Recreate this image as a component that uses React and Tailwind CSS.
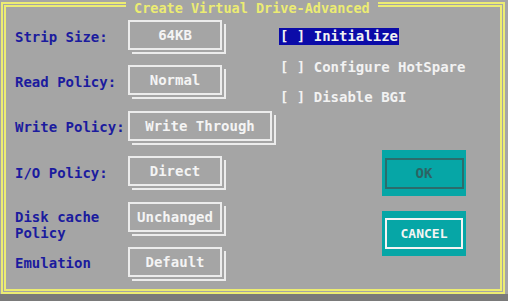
import React from "react";

const rows = [
  { label: "Strip Size:", value: "64KB", w: "w-[94px]" },
  { label: "Read Policy:", value: "Normal", w: "w-[94px]" },
  { label: "Write Policy:", value: "Write Through", w: "w-[144px]" },
  { label: "I/O Policy:", value: "Direct", w: "w-[94px]" },
  { label: ["Disk cache", "Policy"], value: "Unchanged", w: "w-[94px]" },
  { label: "Emulation", value: "Default", w: "w-[94px]" },
];

const options = [
  { text: "[ ] Initialize", active: true },
  { text: "[ ] Configure HotSpare" },
  { text: "[ ] Disable BGI" },
];

function ValueBox({ value, w }) {
  return (
    <div
      className={`${w} h-[30px] border-2 border-[#ececec] flex items-center justify-center text-[#f4f4f4] shadow-[2px_2px_0_#a5a5a5,4px_4px_0_#ececec]`}
    >
      {value}
    </div>
  );
}

export default function App() {
  return (
    <div
      className="w-[508px] h-[301px] bg-[#a5a5a5] flex flex-col font-bold text-[14px] leading-[16px]"
      style={{ fontFamily: '"DejaVu Sans Mono", "Liberation Mono", monospace' }}
    >
      <div className="relative ml-[1px] mt-[2px] w-[504px] h-[292px] border-[5px] border-double border-[#ecec72] flex">
        <div className="absolute top-[-7px] left-[120px] px-[8px] pt-[1px] bg-[#a5a5a5] text-[#ecec72] text-[13.5px] leading-[14px]">
          Create Virtual Drive-Advanced
        </div>

        {/* left column: labels + value boxes */}
        <div className="w-[273px] pl-[9px] pt-[13px] flex flex-col gap-[15.4px]">
          {rows.map((r, i) => (
            <div key={i} className="flex h-[30px] items-center">
              {Array.isArray(r.label) ? (
                <div className="w-[113px] self-start mt-[7px] text-[#1b1b9e]">
                  {r.label[0]}
                  <br />
                  {r.label[1]}
                </div>
              ) : (
                <div className="w-[113px] mt-[3px] text-[#1b1b9e]">{r.label}</div>
              )}
              <ValueBox value={r.value} w={r.w} />
            </div>
          ))}
        </div>

        {/* right column: options + buttons */}
        <div className="flex-1 pt-[21px] flex flex-col">
          <div className="flex flex-col gap-[13.5px] items-start">
            {options.map((o, i) => (
              <div
                key={i}
                className={`h-[17px] leading-[17px] px-[1px] whitespace-pre text-[#f2f2f2] ${
                  o.active ? "bg-[#0b0ba8]" : ""
                }`}
              >
                {o.text}
              </div>
            ))}
          </div>

          <div className="ml-[103px] mt-[44px] w-[84px] h-[46px] bg-[#06a6a6] flex items-center justify-center">
            <div className="w-[79px] h-[31px] border-2 border-[#2c6c6c] flex items-center justify-center text-[#2c6464]">
              OK
            </div>
          </div>
          <div className="ml-[103px] mt-[15px] w-[84px] h-[45px] bg-[#06a6a6] flex items-center justify-center">
            <div className="w-[78px] h-[31px] border-2 border-[#f4f4f4] flex items-center justify-center text-[#f4f4f4] text-[13px]">
              CANCEL
            </div>
          </div>
        </div>
      </div>
      <div className="flex-1 bg-[#7a7a7a]" />
    </div>
  );
}
